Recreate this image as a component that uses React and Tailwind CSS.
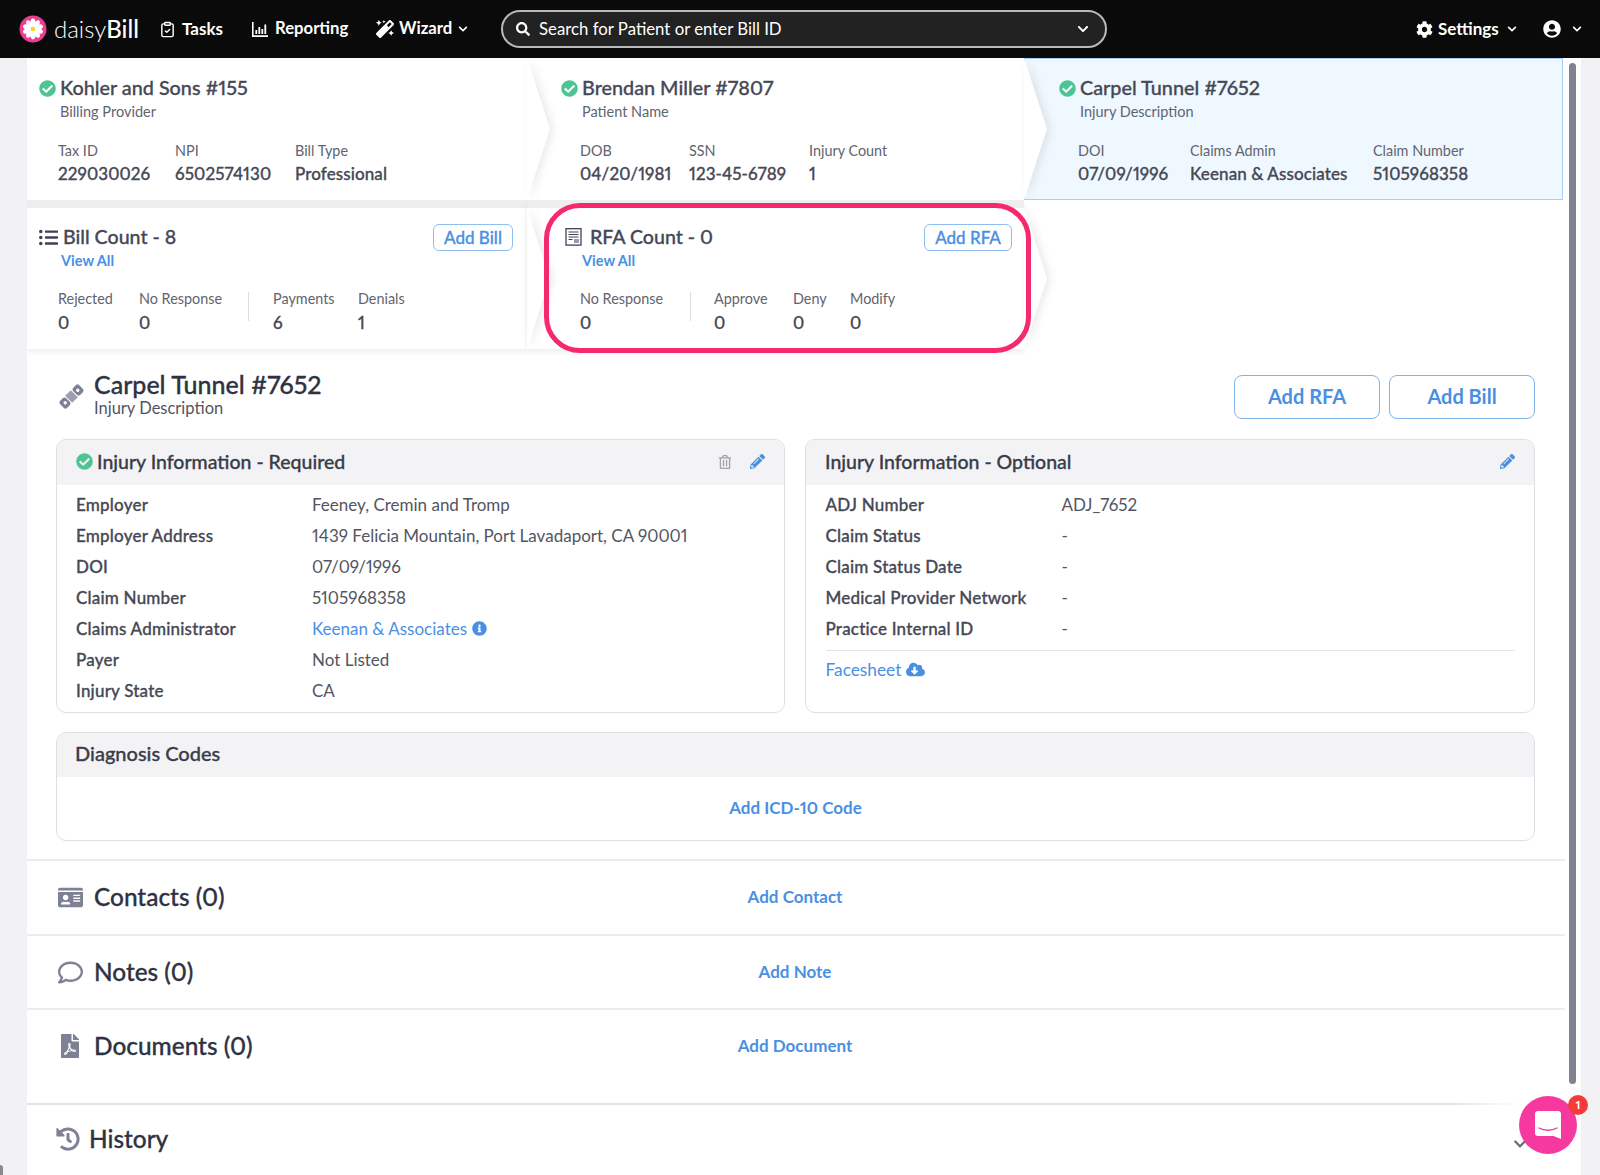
import {
  FaCheckCircle,
  FaChevronDown,
  FaCloudDownloadAlt,
  FaCog,
  FaFilePdf,
  FaHistory,
  FaIdCard,
  FaInfoCircle,
  FaListUl,
  FaMagic,
  FaPencilAlt,
  FaRegComment,
  FaRegTrashAlt,
  FaSearch,
  FaUserCircle,
} from "react-icons/fa";
import { ClipboardCheck } from "lucide-react";

const Logo = () => (
  <svg width="28" height="28" viewBox="0 0 28 28">
    <circle cx="14" cy="14" r="13.5" fill="#ea3f90" />
    {[0, 36, 72, 108, 144, 180, 216, 252, 288, 324].map((deg) => (
      <ellipse key={deg} cx="14" cy="8.4" rx="2.6" ry="4.8" fill="#fff" transform={`rotate(${deg} 14 14)`} />
    ))}
    <circle cx="14" cy="14" r="2.3" fill="#f7d322" />
  </svg>
);

const ReportIcon = () => (
  <svg width="16" height="15" viewBox="0 0 16 15" fill="#fff">
    <path d="M0 0h1.6v13.2H16V15H0z" />
    <path d="M3.4 8h1.8v4H3.4zM6.4 5h1.8v7H6.4zM9.4 7h1.8v5H9.4zM12.4 2.5h1.8V12h-1.8z" />
  </svg>
);

const RfaIcon = () => (
  <svg width="17" height="18" viewBox="0 0 17 18">
    <rect x="1" y="0.7" width="15" height="16.4" fill="#fff" stroke="#3f4254" strokeWidth="1.3" />
    <path d="M3.5 4h10M3.5 6.5h10M3.5 9h10M3.5 11.5h4" stroke="#3f4254" strokeWidth="1" />
    <rect x="9" y="11" width="5" height="4" fill="#9a9caa" />
  </svg>
);

const BandageIcon = () => (
  <svg width="27" height="27" viewBox="0 0 27 27" className="shrink-0">
    <g transform="rotate(-45 13.5 13.5)" fill="#7e8193">
      <rect x="0" y="8.5" width="8.5" height="10" rx="2.5" />
      <rect x="18.5" y="8.5" width="8.5" height="10" rx="2.5" />
      <rect x="9.5" y="8.5" width="8" height="10" fill="#9c9eae" />
      <circle cx="4.6" cy="13.5" r="1.7" fill="#fff" />
      <circle cx="22.4" cy="13.5" r="1.7" fill="#fff" />
    </g>
  </svg>
);

const Chevron = () => (
  <svg
    className="absolute top-0 left-full z-20 h-full w-[23px] drop-shadow-[3px_0_4px_rgba(0,0,0,0.09)]"
    viewBox="0 0 23 100"
    preserveAspectRatio="none"
  >
    <polygon points="0,0 23,50 0,100" fill="#fff" />
  </svg>
);

const Stat = ({ label, value, className }) => (
  <div className={`shrink-0 ${className}`}>
    <div className="text-[14.4px] leading-[18px] text-[#62646f]">{label}</div>
    <div className="mt-[3px] text-[17px] leading-[22px] font-medium tracking-[0.1px] text-[#464855] [-webkit-text-stroke:0.3px]">{value}</div>
  </div>
);

const SummaryCard = ({ width, title, sub, left, statPl, stats, blue, last }) => (
  <div
    className={`relative h-[142px] shrink-0 ${blue ? "bg-[#eff8ff] shadow-[inset_0_0_0_1px_#a5cdf6]" : "bg-white"}`}
    style={{ width }}
  >
    <div className="flex h-[60px] items-start pt-[21px]" style={{ paddingLeft: left }}>
      <FaCheckCircle className="mt-[1px] shrink-0 text-[17px] text-[#4cc592]" />
      <div className="ml-[4px]">
        <div className="-mt-[1px] text-[19.8px] leading-[19px] font-medium text-[#464855] [-webkit-text-stroke:0.3px]">{title}</div>
        <div className="mt-[6px] text-[14.5px] leading-[18px] text-[#62646f]">{sub}</div>
      </div>
    </div>
    <div className="mt-[24px] flex" style={{ paddingLeft: statPl }}>
      {stats.map((s) => (
        <Stat key={s.label} label={s.label} value={s.value} className={s.w} />
      ))}
    </div>
    {!last && <Chevron />}
  </div>
);

const CountCard = ({ width, pl, statPl, pr, icon, iconGap, title, viewPl, button, buttonW, children }) => (
  <div className="relative h-[149px] shrink-0 border-t-8 border-[#eeeeee] bg-white shadow-[0_3px_5px_rgba(0,0,0,0.07)]" style={{ width }}>
    <div className="flex items-start justify-between pt-[16px]" style={{ paddingLeft: pl, paddingRight: pr }}>
      <div>
        <div className="flex h-[26px] items-center text-[19.6px] font-medium text-[#464855] [-webkit-text-stroke:0.3px]" style={{ gap: iconGap }}>
          {icon}
          <span>{title}</span>
        </div>
        <div className="mt-[2px] text-[14.5px] leading-[18px] font-bold text-[#4a90e2]" style={{ marginLeft: viewPl }}>
          View All
        </div>
      </div>
      <button
        className="h-[27px] rounded-[6px] border border-[#8fbdf2] text-[17px] leading-[24px] font-medium text-[#4a90e2] [-webkit-text-stroke:0.3px]"
        style={{ width: buttonW }}
      >
        {button}
      </button>
    </div>
    <div className="mt-[20px] flex" style={{ paddingLeft: statPl }}>
      {children}
    </div>
    <Chevron />
  </div>
);

const CountStat = ({ label, value, className }) => (
  <div className={`shrink-0 ${className}`}>
    <div className="text-[14.4px] leading-[18px] text-[#62646f]">{label}</div>
    <div className="mt-[4px] text-[17px] leading-[22px] font-medium text-[#464855] [-webkit-text-stroke:0.3px]">{value}</div>
  </div>
);

const Divider = ({ className }) => <div className={`mt-[2px] h-[29px] w-px bg-[#dddde0] ${className}`} />;

const InfoRow = ({ label, value }) => (
  <div className="flex h-[31px] items-center">
    <div className="w-[236px] shrink-0 text-[17px] font-medium tracking-[0.2px] text-[#464855] [-webkit-text-stroke:0.3px]">{label}</div>
    <div className="text-[17px] text-[#53555f]">{value}</div>
  </div>
);

const Panel = ({ title, check, children, actions }) => (
  <div className="overflow-hidden rounded-[10px] border border-[#dfdfe3] bg-white">
    <div className="flex h-[45px] items-center bg-[#f3f3f5] pr-[19px] pb-[2px] pl-[19px]">
      {check && <FaCheckCircle className="mr-[4px] text-[17px] text-[#4cc592]" />}
      <span className="text-[19.5px] font-medium text-[#3a3c4a] [-webkit-text-stroke:0.3px]">{title}</span>
      <div className="ml-auto flex items-center gap-[18px]">{actions}</div>
    </div>
    {children}
  </div>
);

const SectionRow = ({ icon, title, link, className }) => (
  <div className={`w-[1538px] border-t-2 border-[#ececef] pt-[22px] ${className}`}>
    <div className="grid w-[1536px] grid-cols-[1fr_auto_1fr]">
      <div className="flex h-[28px] items-center pl-[31px]">
        <span className="flex w-[36px] text-[#7e8193]">{icon}</span>
        <span className="text-[24.4px] font-medium text-[#2f3242] [-webkit-text-stroke:0.3px]">{title}</span>
      </div>
      <div className="flex h-[28px] items-center text-[17px] font-bold text-[#4a90e2]">{link}</div>
      <div />
    </div>
  </div>
);

export default function App() {
  return (
    <div className="relative flex h-[1175px] w-[1600px] flex-col overflow-hidden bg-[#f2f2f4] font-['Lato','Liberation_Sans',sans-serif] proportional-nums">
      <header className="flex h-[58px] shrink-0 items-center bg-[#0a0a0a] pl-[19px] text-white">
        <Logo />
        <div className="ml-[7px] w-[84px] text-[24px] leading-none font-light">
          daisy<span className="font-medium">Bill</span>
        </div>
        <ClipboardCheck size={17} className="ml-[21px]" />
        <span className="ml-[6px] w-[40px] text-[17px] font-bold">Tasks</span>
        <span className="ml-[30px]">
          <ReportIcon />
        </span>
        <span className="ml-[7px] w-[75px] text-[16.7px] font-bold">Reporting</span>
        <FaMagic className="ml-[26px] text-[18px]" />
        <span className="ml-[5px] w-[54px] text-[16.7px] font-bold">Wizard</span>
        <FaChevronDown className="ml-[5px] text-[10px]" />
        <div className="ml-[33px] flex h-[38px] w-[606px] items-center rounded-[19px] border-2 border-[#b9b9b9] bg-[#222222] pr-[16px] pl-[13px]">
          <FaSearch className="text-[14px]" />
          <span className="ml-[9px] text-[16.8px]">Search for Patient or enter Bill ID</span>
          <FaChevronDown className="ml-auto text-[12px]" />
        </div>
        <FaCog className="ml-[309px] text-[17px]" />
        <span className="ml-[5px] w-[61px] text-[17px] font-bold">Settings</span>
        <FaChevronDown className="ml-[8px] text-[10px]" />
        <FaUserCircle className="ml-[26px] text-[18px]" />
        <FaChevronDown className="ml-[11px] text-[10px]" />
      </header>

      <div className="flex min-h-0 flex-1">
        <div className="w-[27px] shrink-0" />
        <main className="w-[1554px] shrink-0 overflow-hidden bg-white">
          <div className="flex">
            <SummaryCard
              width={500}
              left={12}
              statPl={31}
              title="Kohler and Sons #155"
              sub="Billing Provider"
              stats={[
                { label: "Tax ID", value: "229030026", w: "w-[117px]" },
                { label: "NPI", value: "6502574130", w: "w-[120px]" },
                { label: "Bill Type", value: "Professional", w: "" },
              ]}
            />
            <SummaryCard
              width={497}
              left={34}
              statPl={53}
              title="Brendan Miller #7807"
              sub="Patient Name"
              stats={[
                { label: "DOB", value: "04/20/1981", w: "w-[109px]" },
                { label: "SSN", value: "123-45-6789", w: "w-[120px]" },
                { label: "Injury Count", value: "1", w: "" },
              ]}
            />
            <SummaryCard
              width={539}
              left={35}
              statPl={54}
              blue
              last
              title="Carpel Tunnel #7652"
              sub="Injury Description"
              stats={[
                { label: "DOI", value: "07/09/1996", w: "w-[112px]" },
                { label: "Claims Admin", value: "Keenan & Associates", w: "w-[183px]" },
                { label: "Claim Number", value: "5105968358", w: "" },
              ]}
            />
          </div>
          <div className="flex">
            <CountCard
              width={500}
              pl={12}
              statPl={31}
              pr={14}
              icon={<FaListUl className="text-[19px] text-[#3f4254]" />}
              iconGap={5}
              title="Bill Count - 8"
              viewPl={22}
              button="Add Bill"
              buttonW={80}
            >
              <CountStat label="Rejected" value="0" className="w-[81px]" />
              <CountStat label="No Response" value="0" className="w-[109px]" />
              <Divider className="mr-[24px]" />
              <CountStat label="Payments" value="6" className="w-[85px]" />
              <CountStat label="Denials" value="1" />
            </CountCard>
            <CountCard
              width={497}
              pl={33}
              statPl={53}
              pr={12}
              icon={<span className="ml-[5px]"><RfaIcon /></span>}
              iconGap={8}
              title="RFA Count - 0"
              viewPl={22}
              button="Add RFA"
              buttonW={88}
            >
              <CountStat label="No Response" value="0" className="w-[110px]" />
              <Divider className="mr-[23px]" />
              <CountStat label="Approve" value="0" className="w-[79px]" />
              <CountStat label="Deny" value="0" className="w-[57px]" />
              <CountStat label="Modify" value="0" />
            </CountCard>
          </div>

          <div className="mx-[29px] w-[1479px]">
            <div className="mt-[26px] flex h-[44px] items-start">
              <span className="mt-[8px] ml-[2px]">
                <BandageIcon />
              </span>
              <div className="-mt-[5px] ml-[9px]">
                <div className="text-[25px] leading-[28px] font-medium text-[#2f3242] [-webkit-text-stroke:0.3px]">Carpel Tunnel #7652</div>
                <div className="mt-[1px] text-[16.5px] leading-[19px] text-[#53555f]">Injury Description</div>
              </div>
              <button className="ml-auto h-[44px] w-[146px] rounded-[8px] border border-[#7fb3ee] pb-[2px] text-[20px] font-bold text-[#4a90e2]">
                Add RFA
              </button>
              <button className="ml-[9px] h-[44px] w-[146px] rounded-[8px] border border-[#7fb3ee] pb-[2px] text-[20px] font-bold text-[#4a90e2]">
                Add Bill
              </button>
            </div>

            <div className="mt-[20px] grid h-[274px] grid-cols-[729px_730px] gap-[20px]">
              <Panel
                title="Injury Information - Required"
                check
                actions={
                  <>
                    <FaRegTrashAlt className="text-[14px] text-[#a0a2ad]" />
                    <FaPencilAlt className="text-[15px] text-[#4a90e2]" />
                  </>
                }
              >
                <div className="px-[19px] pt-[4px]">
                  <InfoRow label="Employer" value="Feeney, Cremin and Tromp" />
                  <InfoRow label="Employer Address" value="1439 Felicia Mountain, Port Lavadaport, CA 90001" />
                  <InfoRow label="DOI" value="07/09/1996" />
                  <InfoRow label="Claim Number" value="5105968358" />
                  <InfoRow
                    label="Claims Administrator"
                    value={
                      <span className="flex items-center gap-[5px] text-[#4a90e2]">
                        Keenan &amp; Associates <FaInfoCircle className="text-[15px]" />
                      </span>
                    }
                  />
                  <InfoRow label="Payer" value="Not Listed" />
                  <InfoRow label="Injury State" value="CA" />
                </div>
              </Panel>
              <Panel title="Injury Information - Optional" actions={<FaPencilAlt className="text-[15px] text-[#4a90e2]" />}>
                <div className="pt-[4px] pr-[19px] pl-[19.5px]">
                  <InfoRow label="ADJ Number" value="ADJ_7652" />
                  <InfoRow label="Claim Status" value="-" />
                  <InfoRow label="Claim Status Date" value="-" />
                  <InfoRow label="Medical Provider Network" value="-" />
                  <InfoRow label="Practice Internal ID" value="-" />
                  <div className="mt-[6px] flex h-[38px] items-center gap-[5px] border-t border-[#e4e4e7] text-[17.3px] text-[#4a90e2]">
                    Facesheet <FaCloudDownloadAlt className="text-[19px]" />
                  </div>
                </div>
              </Panel>
            </div>

            <div className="mt-[19px] h-[109px] overflow-hidden rounded-[10px] border border-[#dfdfe3]">
              <div className="flex h-[44px] items-center bg-[#f3f3f5] px-[18px] pb-[5px] text-[20px] font-medium text-[#3a3c4a] [-webkit-text-stroke:0.3px]">
                Diagnosis Codes
              </div>
              <div className="flex h-[61px] items-center justify-center text-[17px] font-bold text-[#4a90e2]">
                Add ICD-10 Code
              </div>
            </div>
          </div>

          <div className="mt-[18px]">
            <SectionRow icon={<FaIdCard className="text-[25px]" />} title="Contacts (0)" link="Add Contact" className="h-[75px]" />
            <SectionRow icon={<FaRegComment className="text-[25px]" />} title="Notes (0)" link="Add Note" className="h-[74px]" />
            <SectionRow icon={<FaFilePdf className="text-[24px]" />} title="Documents (0)" link="Add Document" className="h-[95px]" />
            <div className="flex w-[1538px] items-center border-t-2 border-[#e2e2e8] pt-[16px] pl-[29px]">
              <FaHistory className="text-[24px] text-[#7e8193]" />
              <span className="ml-[9px] text-[24.4px] font-medium text-[#2f3242] [-webkit-text-stroke:0.3px]">History</span>
            </div>
          </div>
        </main>
      </div>

      {/* overlays: custom scrollbar, pink highlight, chat launcher */}
      <div className="absolute top-[1000px] left-[1400px] h-[175px] w-[181px] bg-[radial-gradient(circle_at_82%_71%,#ffffff_35px,rgba(255,255,255,0)_100px)]" />
      <div className="absolute top-[63px] left-[1569px] h-[1021px] w-[7px] rounded-full bg-[#80828f]" />
      <div className="absolute top-[203px] left-[544px] z-30 h-[150px] w-[487px] rounded-[36px] border-[5px] border-[#f6296c]" />
      <FaChevronDown className="absolute top-[1137px] left-[1513px] text-[14px] text-[#6b6d7d]" />
      <div className="absolute top-[1096px] left-[1519px] flex h-[58px] w-[58px] items-center justify-center rounded-full bg-[#f5399f]">
        <svg width="28" height="30" viewBox="0 0 28 30">
          <path d="M4 1h20a3 3 0 0 1 3 3v25l-7.5-3H4a3 3 0 0 1-3-3V4a3 3 0 0 1 3-3z" fill="#fff" />
          <path d="M5 18c5 3 13 3 18 0" fill="none" stroke="#f5399f" strokeWidth="1.4" strokeLinecap="round" />
        </svg>
      </div>
      <div className="absolute top-[1095px] left-[1568px] flex h-[20px] w-[20px] items-center justify-center rounded-full bg-[#f23c3c] text-[12px] font-bold text-white">
        1
      </div>
      <div className="absolute bottom-0 left-0 h-[10px] w-[3px] rounded-tr-full bg-[#8a8a8a]" />
    </div>
  );
}
